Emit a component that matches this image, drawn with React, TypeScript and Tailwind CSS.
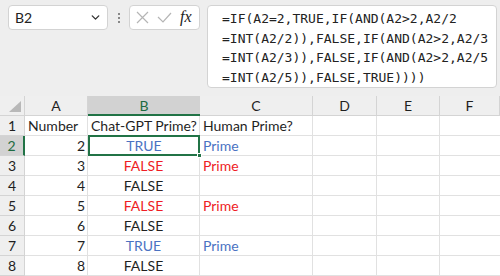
import { ChevronDown } from 'lucide-react';

type Cell = { text: string; color?: string };

const cols = [
  { key: 'A', w: 'w-[63px]' },
  { key: 'B', w: 'w-[112px]' },
  { key: 'C', w: 'w-[113px]' },
  { key: 'D', w: 'w-[64px]' },
  { key: 'E', w: 'w-[63px]' },
  { key: 'F', w: 'w-[60px]' },
];

const rows: { n: string; b: Cell; c?: Cell }[] = [
  { n: '2', b: { text: 'TRUE', color: 'text-[#4a72c2]' }, c: { text: 'Prime', color: 'text-[#4a72c2]' } },
  { n: '3', b: { text: 'FALSE', color: 'text-[#ee1c24]' }, c: { text: 'Prime', color: 'text-[#ee1c24]' } },
  { n: '4', b: { text: 'FALSE' } },
  { n: '5', b: { text: 'FALSE', color: 'text-[#ee1c24]' }, c: { text: 'Prime', color: 'text-[#ee1c24]' } },
  { n: '6', b: { text: 'FALSE' } },
  { n: '7', b: { text: 'TRUE', color: 'text-[#4a72c2]' }, c: { text: 'Prime', color: 'text-[#4a72c2]' } },
  { n: '8', b: { text: 'FALSE' } },
];

const formula = [
  '=IF(A2=2,TRUE,IF(AND(A2>2,A2/2',
  '=INT(A2/2)),FALSE,IF(AND(A2>2,A2/3',
  '=INT(A2/3)),FALSE,IF(AND(A2>2,A2/5',
  '=INT(A2/5)),FALSE,TRUE))))',
];

function RowHeader({ label, active }: { label: string; active?: boolean }) {
  return (
    <div
      className={`w-[25px] h-full flex items-center justify-center border-b border-[#d4d4d4] ${
        active ? 'bg-[#d2d2d2] border-r-2 border-r-[#217346] text-[#1e6b41]' : 'bg-[#efefef] border-r border-r-[#d4d4d4]'
      }`}
    >
      {label}
    </div>
  );
}

export default function App() {
  return (
    <div className="w-[500px] h-[276px] overflow-hidden bg-[#eeeeee] text-[#1f1f1f] font-['Lato',sans-serif] text-[14px] whitespace-nowrap">
      {/* formula bar */}
      <div className="h-[96px] flex items-start pt-[5px] pl-[8px]">
        <div className="w-[100px] h-[25px] bg-white border border-[#d3d3d3] rounded-[4px] flex items-center justify-between pl-[6px] pr-[5px]">
          <span className="text-[14px] text-[#222]">B2</span>
          <ChevronDown className="w-[13px] h-[13px] text-[#333]" strokeWidth={2.5} />
        </div>
        <div className="w-[21px] h-[25px] flex flex-col items-center justify-center gap-[2px]">
          <span className="w-[2px] h-[2px] bg-[#888]" />
          <span className="w-[2px] h-[2px] bg-[#888]" />
          <span className="w-[2px] h-[2px] bg-[#888]" />
        </div>
        <div className="w-[71px] h-[25px] bg-white border border-[#d3d3d3] rounded-[4px] flex items-center pl-[6px] gap-[8px]">
          <svg width="13" height="13" viewBox="0 0 13 13" fill="none" stroke="#b5b5b5" strokeWidth="1.2">
            <path d="M1 1 L12 12 M12 1 L1 12" />
          </svg>
          <svg width="15" height="11" viewBox="0 0 15 11" fill="none" stroke="#b5b5b5" strokeWidth="1.2">
            <path d="M1 5 L6 10 L14 1" />
          </svg>
          <span className="font-['Liberation_Serif',serif] italic text-[16px] text-[#222] leading-none -mt-[2px]">fx</span>
        </div>
        <div className="ml-[7px] w-[290px] h-[83px] bg-white border border-[#d3d3d3] rounded-[4px] pl-[14px] pt-[3px] font-['DejaVu_Sans_Mono',monospace] text-[13px] leading-[19.5px] text-[#222] whitespace-pre">
          {formula.map((l) => (
            <div key={l}>{l}</div>
          ))}
        </div>
      </div>

      {/* column headers */}
      <div className="flex h-[20px]">
        <div className="w-[25px] h-full bg-[#efefef] border-r border-b border-[#d4d4d4] relative">
          <svg className="absolute right-[3px] bottom-[3px]" width="12" height="11" viewBox="0 0 12 11">
            <path d="M12 0 L12 11 L0 11 Z" fill="#b8b8b8" />
          </svg>
        </div>
        {cols.map((c) =>
          c.key === 'B' ? (
            <div
              key={c.key}
              className={`${c.w} h-full bg-[#d2d2d2] border-b-2 border-[#217346] text-[#1e6b41] flex items-center justify-center`}
            >
              {c.key}
            </div>
          ) : (
            <div
              key={c.key}
              className={`${c.w} h-full bg-[#efefef] border-r border-b border-[#d4d4d4] flex items-center justify-center`}
            >
              {c.key}
            </div>
          )
        )}
      </div>

      {/* row 1 */}
      <div className="flex h-[20px] bg-white">
        <RowHeader label="1" />
        <div className="w-[63px] border-r border-b border-[#e1e1e1] pl-[3px] flex items-center">Number</div>
        <div className="w-[112px] border-r border-b border-[#e1e1e1] pl-[3px] flex items-center">Chat-GPT Prime?</div>
        <div className="w-[113px] border-r border-b border-[#e1e1e1] pl-[3px] flex items-center">Human Prime?</div>
        <div className="w-[64px] border-r border-b border-[#e1e1e1]" />
        <div className="w-[63px] border-r border-b border-[#e1e1e1]" />
        <div className="w-[60px] border-b border-[#e1e1e1]" />
      </div>

      {rows.map((r) => {
        const active = r.n === '2';
        return (
          <div key={r.n} className="flex h-[20px] bg-white">
            <RowHeader label={r.n} active={active} />
            <div className="w-[63px] border-r border-b border-[#e1e1e1] pr-[2px] flex items-center justify-end">{r.n}</div>
            {active ? (
              <div className="w-[112px] border-2 border-[#217346] relative flex items-center justify-center -mt-px h-[21px]">
                <span className={r.b.color}>{r.b.text}</span>
                <span className="absolute -right-[4px] -bottom-[4px] w-[5px] h-[5px] bg-[#217346] border border-white" />
              </div>
            ) : (
              <div className={`w-[112px] border-r border-b border-[#e1e1e1] flex items-center justify-center ${r.b.color ?? ''}`}>
                {r.b.text}
              </div>
            )}
            <div className={`w-[113px] border-r border-b border-[#e1e1e1] pl-[3px] flex items-center ${r.c?.color ?? ''}`}>
              {r.c?.text}
            </div>
            <div className="w-[64px] border-r border-b border-[#e1e1e1]" />
            <div className="w-[63px] border-r border-b border-[#e1e1e1]" />
            <div className="w-[60px] border-b border-[#e1e1e1]" />
          </div>
        );
      })}
    </div>
  );
}
